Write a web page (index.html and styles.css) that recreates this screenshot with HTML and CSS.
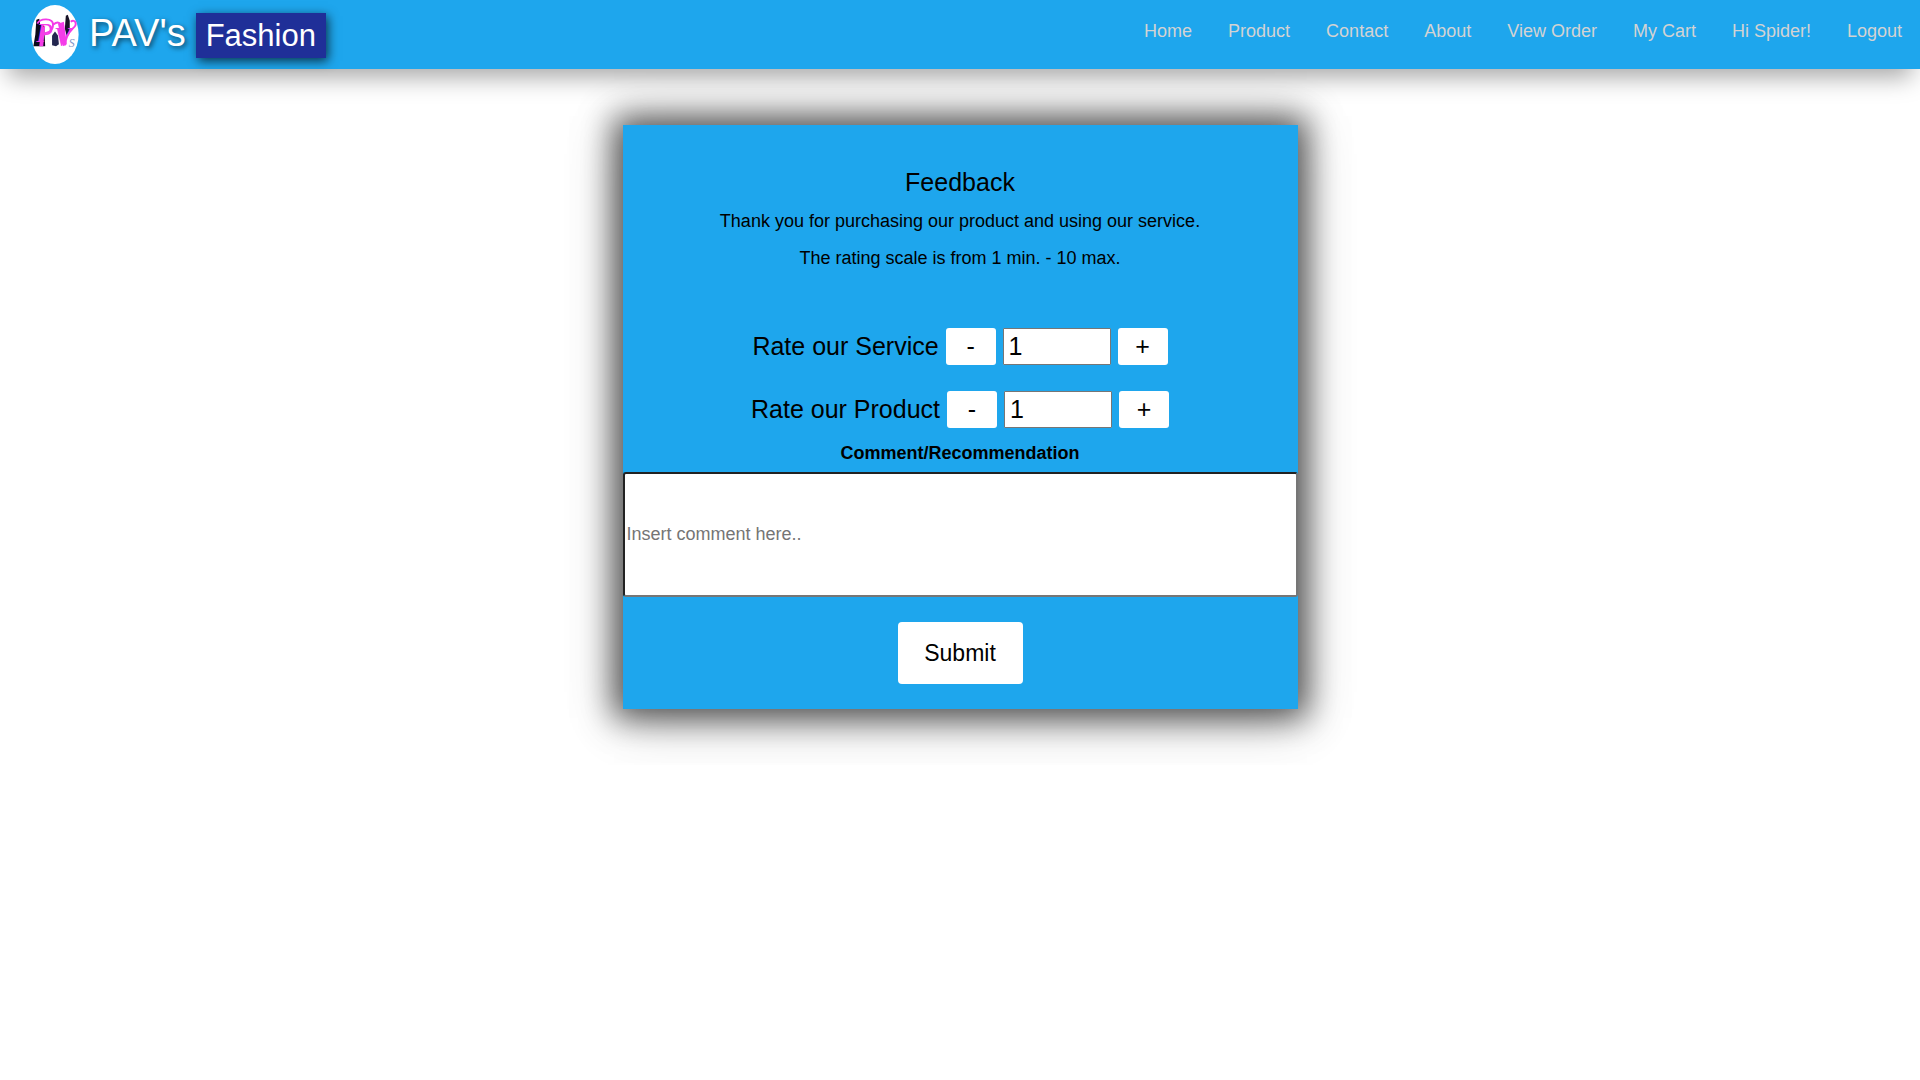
FILE: index.html
```html
<!DOCTYPE html>
<html lang="en">
<head>
<meta charset="utf-8">
<meta name="viewport" content="width=device-width, initial-scale=1">
<title>PAV's Fashion - Feedback</title>
<link rel="stylesheet" href="styles.css">
</head>
<body>
<header class="navbar">
  <a class="brand" href="#">
    <svg class="logo" viewBox="0 0 48 60" aria-hidden="true">
      <ellipse cx="24" cy="30" rx="24" ry="30" fill="#fff"/>
      <path d="M5 15l3-1 1 6 4 1 1 21H2l2-12z" fill="#0b0b1c"/>
      <path d="M21 31l3-4 3 4 1 9-3 2-4-1z" fill="#23264f"/>
      <path d="M35 11l2-1 2 6v12l-3 4-2-8z" fill="#171226"/>
      <text x="5" y="38" class="logo-letter">P</text>
      <text x="23" y="42" class="logo-letter">V</text>
      <path d="M10 24l4-3-2 21H8z" fill="#f43ce8"/>
      <path d="M27 19l6-2 2 15 1 8-4 2z" fill="#f43ce8"/>
      <path d="M6 19c3-6 16-6 16 1 0 7-7 10-11 8M22 20c4-3 6-3 8 0M34 41c1-9 4-13 8-17 6-5 2-10-2-7" fill="none" stroke="#f43ce8" stroke-width="2"/>
      <text x="38" y="43" class="logo-small">S</text>
    </svg>
    <span class="brand-name">PAV's</span>
    <span class="brand-tag">Fashion</span>
  </a>
  <nav class="menu">
    <a href="#">Home</a>
    <a href="#">Product</a>
    <a href="#">Contact</a>
    <a href="#">About</a>
    <a href="#">View Order</a>
    <a href="#">My Cart</a>
    <a href="#">Hi Spider!</a>
    <a href="#">Logout</a>
  </nav>
</header>
<main class="page">
  <form class="card">
    <h1 class="title">Feedback</h1>
    <p class="note">Thank you for purchasing our product and using our service.</p>
    <p class="note">The rating scale is from 1 min. - 10 max.</p>
    <div class="ratings">
      <div class="rating">
        <label for="service">Rate our Service</label>
        <button class="step" type="button">-</button>
        <input class="score" id="service" type="text" value="1">
        <button class="step" type="button">+</button>
      </div>
      <div class="rating">
        <label for="product">Rate our Product</label>
        <button class="step" type="button">-</button>
        <input class="score" id="product" type="text" value="1">
        <button class="step" type="button">+</button>
      </div>
    </div>
    <label class="comment-label" for="comment">Comment/Recommendation</label>
    <input class="comment" id="comment" type="text" placeholder="Insert comment here..">
    <button class="submit" type="submit">Submit</button>
  </form>
</main>
</body>
</html>
```
FILE: styles.css
```css
* {
  box-sizing: border-box;
}

body {
  margin: 0;
  background: #fff;
  color: #000;
  font-family: "Liberation Sans", Arial, sans-serif;
  font-size: 18px;
}

button,
input {
  font-family: inherit;
}

.navbar {
  display: flex;
  justify-content: space-between;
  padding: 5px 18px 5px 31px;
  background: #1ea6ed;
  box-shadow: 0 16px 24px -8px rgba(0, 0, 0, 0.35);
}

.brand {
  display: flex;
  align-items: center;
  gap: 10px;
  color: #fff;
  text-decoration: none;
}

.logo {
  width: 48px;
  height: 59px;
}

.logo-letter {
  fill: #f43ce8;
  font-family: "Liberation Serif", serif;
  font-size: 28px;
  font-style: italic;
}

.logo-small {
  fill: #7f96c8;
  font-family: "Liberation Serif", serif;
  font-size: 12px;
  font-style: italic;
}

.brand-name {
  font-size: 38px;
  line-height: 57px;
  padding-bottom: 2px;
  text-shadow: 2px 2px 5px rgba(0, 0, 0, 0.6);
}

.brand-tag {
  margin-top: 2px;
  padding: 0 10px;
  background: #1f2f98;
  font-size: 31px;
  line-height: 45px;
  box-shadow: 2px 3px 10px rgba(0, 0, 0, 0.7);
}

.menu {
  display: flex;
  gap: 36px;
  padding-top: 10px;
}

.menu a {
  color: #d3d3d3;
  line-height: 32px;
  text-decoration: none;
}

.page {
  display: flex;
  justify-content: center;
  padding: 56px 16px;
}

.card {
  display: flex;
  flex-direction: column;
  align-items: center;
  width: 100%;
  max-width: 675px;
  padding: 39px 0 25px;
  background: #1ea6ed;
  box-shadow: 0 0 30px 9px rgba(0, 0, 0, 0.6), 0 6px 50px 2px rgba(0, 0, 0, 0.3);
}

.title {
  margin: 0 0 2px;
  font-size: 25px;
  font-weight: 400;
  line-height: 37px;
}

.note {
  margin: 0;
  line-height: 37px;
}

.ratings {
  display: flex;
  flex-direction: column;
  gap: 26px;
  padding: 51px 0 7px;
}

.rating {
  display: flex;
  justify-content: center;
  gap: 7px;
  font-size: 25px;
  line-height: 37px;
}

.step {
  width: 50px;
  height: 37px;
  padding: 0;
  border: 0;
  border-radius: 3px;
  background: #fff;
  color: #000;
  font-size: 25px;
}

.score {
  width: 108px;
  height: 37px;
  padding: 0 5px;
  border: 1px solid #767676;
  border-radius: 1px;
  background: #fff;
  color: #000;
  font-size: 25px;
}

.comment-label {
  font-weight: 700;
  line-height: 37px;
}

.comment {
  width: 100%;
  height: 125px;
  padding: 0 2px;
  border: 2px solid;
  border-color: #222 #767676 #767676 #222;
  border-radius: 3px;
  background: #fff;
  font-size: 18px;
}

.comment::placeholder {
  color: #757575;
}

.submit {
  width: 125px;
  height: 62px;
  margin-top: 25px;
  border: 0;
  border-radius: 4px;
  background: #fff;
  color: #000;
  font-size: 23px;
}
```
